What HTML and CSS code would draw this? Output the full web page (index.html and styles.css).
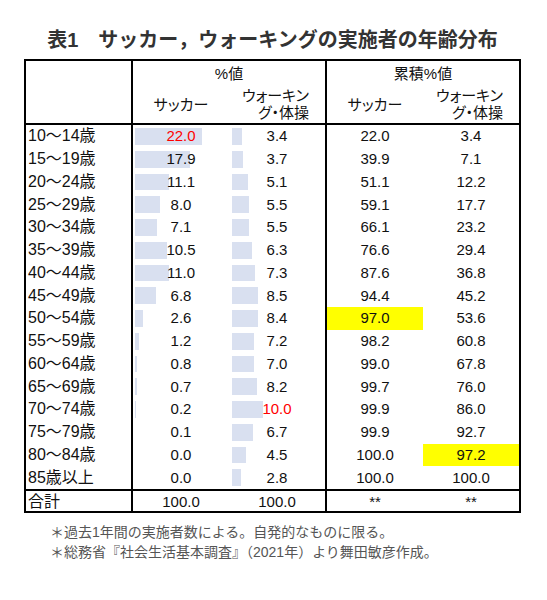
FILE: index.html
```html
<!DOCTYPE html>
<html lang="ja">
<head>
  <meta charset="UTF-8" />
  <meta name="viewport" content="width=device-width, initial-scale=1" />
  <title>表1 サッカー，ウォーキングの実施者の年齢分布</title>
  <link rel="stylesheet" href="styles.css">
</head>
<body>

<div class="page">
  <h1 class="title">表1　サッカー，ウォーキングの実施者の年齢分布</h1>

  <table class="dist">
    <colgroup>
      <col class="c-label">
      <col class="c-num">
      <col class="c-num">
      <col class="c-cum">
      <col class="c-num">
    </colgroup>
    <thead>
      <tr class="head1">
        <th class="label"></th>
        <th colspan="2">%値</th>
        <th colspan="2" class="cum">累積%値</th>
      </tr>
      <tr class="head2">
        <th class="label"></th>
        <th>サッカー</th>
        <th class="wrap">ウォーキン<br>グ・体操</th>
        <th class="cum">サッカー</th>
        <th class="wrap">ウォーキン<br>グ・体操</th>
      </tr>
    </thead>
    <tbody>
      <!-- 年齢層ごとの値 -->
      <tr><td class="label">10～14歳</td><td class="num"><span class="bar" style="width:67px"></span><span class="val red">22.0</span></td><td class="num"><span class="bar wk" style="width:10px"></span><span class="val">3.4</span></td><td class="cum">22.0</td><td>3.4</td></tr>
      <tr><td class="label">15～19歳</td><td class="num"><span class="bar" style="width:55px"></span><span class="val">17.9</span></td><td class="num"><span class="bar wk" style="width:11px"></span><span class="val">3.7</span></td><td class="cum">39.9</td><td>7.1</td></tr>
      <tr><td class="label">20～24歳</td><td class="num"><span class="bar" style="width:34px"></span><span class="val">11.1</span></td><td class="num"><span class="bar wk" style="width:16px"></span><span class="val">5.1</span></td><td class="cum">51.1</td><td>12.2</td></tr>
      <tr><td class="label">25～29歳</td><td class="num"><span class="bar" style="width:25px"></span><span class="val">8.0</span></td><td class="num"><span class="bar wk" style="width:17px"></span><span class="val">5.5</span></td><td class="cum">59.1</td><td>17.7</td></tr>
      <tr><td class="label">30～34歳</td><td class="num"><span class="bar" style="width:22px"></span><span class="val">7.1</span></td><td class="num"><span class="bar wk" style="width:17px"></span><span class="val">5.5</span></td><td class="cum">66.1</td><td>23.2</td></tr>
      <tr><td class="label">35～39歳</td><td class="num"><span class="bar" style="width:32px"></span><span class="val">10.5</span></td><td class="num"><span class="bar wk" style="width:20px"></span><span class="val">6.3</span></td><td class="cum">76.6</td><td>29.4</td></tr>
      <tr><td class="label">40～44歳</td><td class="num"><span class="bar" style="width:34px"></span><span class="val">11.0</span></td><td class="num"><span class="bar wk" style="width:23px"></span><span class="val">7.3</span></td><td class="cum">87.6</td><td>36.8</td></tr>
      <tr><td class="label">45～49歳</td><td class="num"><span class="bar" style="width:21px"></span><span class="val">6.8</span></td><td class="num"><span class="bar wk" style="width:26px"></span><span class="val">8.5</span></td><td class="cum">94.4</td><td>45.2</td></tr>
      <tr><td class="label">50～54歳</td><td class="num"><span class="bar" style="width:8px"></span><span class="val">2.6</span></td><td class="num"><span class="bar wk" style="width:26px"></span><span class="val">8.4</span></td><td class="cum mark">97.0</td><td>53.6</td></tr>
      <tr><td class="label">55～59歳</td><td class="num"><span class="bar" style="width:4px"></span><span class="val">1.2</span></td><td class="num"><span class="bar wk" style="width:22px"></span><span class="val">7.2</span></td><td class="cum">98.2</td><td>60.8</td></tr>
      <tr><td class="label">60～64歳</td><td class="num"><span class="bar" style="width:2px"></span><span class="val">0.8</span></td><td class="num"><span class="bar wk" style="width:22px"></span><span class="val">7.0</span></td><td class="cum">99.0</td><td>67.8</td></tr>
      <tr><td class="label">65～69歳</td><td class="num"><span class="bar" style="width:2px"></span><span class="val">0.7</span></td><td class="num"><span class="bar wk" style="width:25px"></span><span class="val">8.2</span></td><td class="cum">99.7</td><td>76.0</td></tr>
      <tr><td class="label">70～74歳</td><td class="num"><span class="bar" style="width:1px"></span><span class="val">0.2</span></td><td class="num"><span class="bar wk" style="width:31px"></span><span class="val red">10.0</span></td><td class="cum">99.9</td><td>86.0</td></tr>
      <tr><td class="label">75～79歳</td><td class="num"><span class="val">0.1</span></td><td class="num"><span class="bar wk" style="width:21px"></span><span class="val">6.7</span></td><td class="cum">99.9</td><td>92.7</td></tr>
      <tr><td class="label">80～84歳</td><td class="num"><span class="val">0.0</span></td><td class="num"><span class="bar wk" style="width:14px"></span><span class="val">4.5</span></td><td class="cum">100.0</td><td class="mark">97.2</td></tr>
      <tr><td class="label">85歳以上</td><td class="num"><span class="val">0.0</span></td><td class="num"><span class="bar wk" style="width:9px"></span><span class="val">2.8</span></td><td class="cum">100.0</td><td>100.0</td></tr>
    </tbody>
    <tfoot>
      <tr><td class="label">合計</td><td>100.0</td><td>100.0</td><td class="cum">**</td><td>**</td></tr>
    </tfoot>
  </table>

  <div class="notes">
    <p>＊過去1年間の実施者数による。自発的なものに限る。</p>
    <p>＊総務省『社会生活基本調査』（2021年）より舞田敏彦作成。</p>
  </div>
</div>

</body>
</html>
```

FILE: styles.css
```css
* {
  box-sizing: border-box;
}
body {
  margin: 0;
  background: #fff;
  color: #111;
  font-family: "Liberation Sans", "Noto Sans CJK JP", sans-serif;
}
.page {
  padding: 28px 0 0 24px;
}

/* タイトル */
.title {
  width: 497px;
  margin: 0 0 7px;
  text-align: center;
  font-size: 20px;
  line-height: 24px;
  font-weight: bold;
  color: #333;
}

/* 表 */
.dist {
  width: 497px;
  table-layout: fixed;
  border-collapse: separate;
  border-spacing: 0;
  border: 2px solid #000;
  font-size: 15px;
}
.c-label { width: 107px; }
.c-num { width: 96px; }
.c-cum { width: 98px; }

.dist th,
.dist td {
  padding: 0;
  text-align: center;
  font-weight: normal;
  white-space: nowrap;
}
.dist .label {
  text-align: left;
  padding-left: 2px;
  border-right: 2px solid #000;
  font-size: 16px;
}
.dist .cum {
  border-left: 2px solid #000;
}

.head1 th {
  height: 23px;
}
.head2 th {
  height: 41px;
  border-bottom: 2px solid #000;
  font-feature-settings: "palt";
}
.head2 th.wrap {
  text-align: right;
  padding-right: 16px;
  line-height: 17px;
}

tbody td {
  height: 22.75px;
  line-height: 22px;
}
tfoot td {
  height: 22px;
  line-height: 19px;
  border-top: 2px solid #000;
}

/* 棒グラフ */
td.num {
  position: relative;
}
.bar {
  position: absolute;
  left: 2px;
  top: 3px;
  bottom: 3px;
  background: #d9e0f0;
}
.bar.wk {
  left: 3px;
}
.val {
  position: relative;
}
.red {
  color: #f00;
}
.mark {
  background: #ffff00;
  background-clip: content-box;
}

/* 注記 */
.notes {
  margin-top: 9px;
  padding-left: 26px;
  font-size: 14px;
  color: #555;
}
.notes p {
  margin: 0;
  line-height: 20px;
}
```
